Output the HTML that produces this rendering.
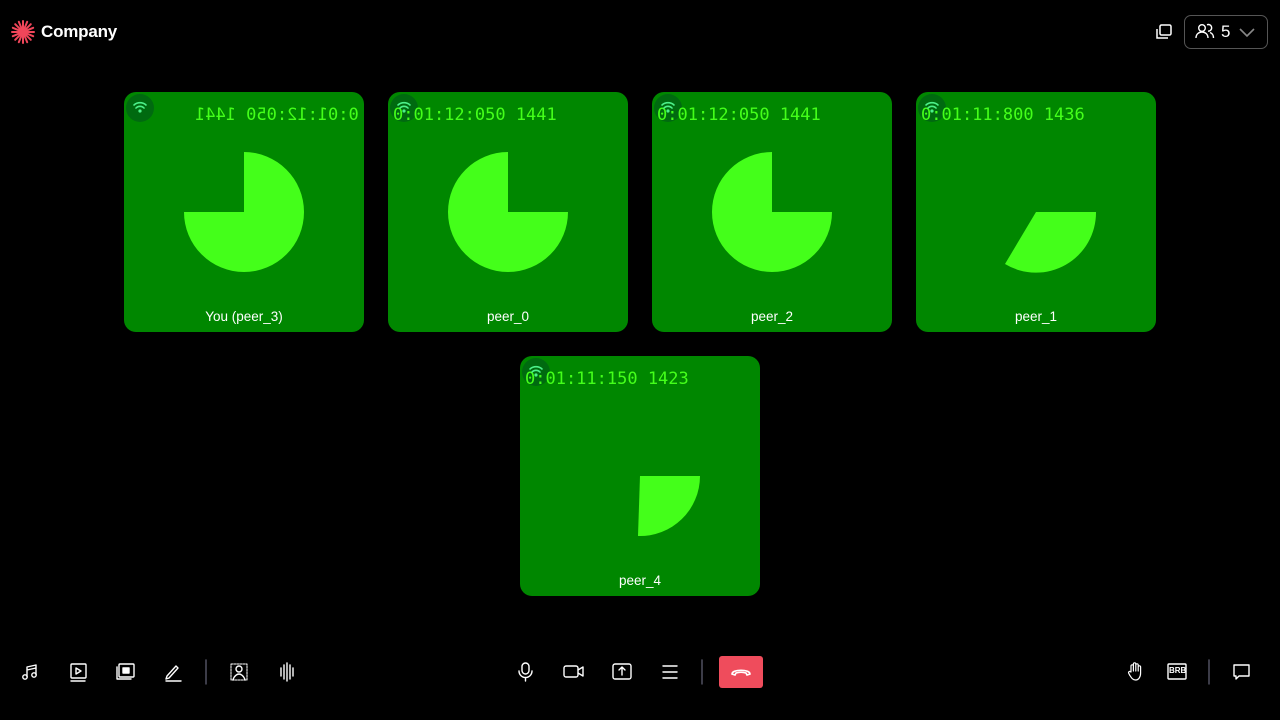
<!DOCTYPE html>
<html><head><style>
body{margin:0;width:1280px;height:720px;background:#000;font-family:"Liberation Sans",sans-serif;position:relative;overflow:hidden;color:#fff}
.tile{position:absolute;width:240px;height:240px;background:#008700;border-radius:12px;overflow:hidden}
.ts{position:absolute;top:13px;left:5px;font-family:"DejaVu Sans Mono","Liberation Mono",monospace;font-size:17px;color:#44ff1a;white-space:nowrap}
.mir{transform:scaleX(-1);left:auto;right:5px}
.wifi{position:absolute;left:2px;top:2px;width:28px;height:28px;border-radius:50%;background:#006a10}
.lbl{position:absolute;bottom:8px;width:100%;text-align:center;font-size:13.5px}
svg.p{position:absolute;left:0;top:0}
.ic{position:absolute}
</style></head><body>
<svg class="ic" style="left:11px;top:20px" width="24" height="24" viewBox="0 0 24 24"><g stroke="#f0465a" stroke-width="2" stroke-linecap="round"><line x1="12" y1="1" x2="12" y2="23"/><line x1="1" y1="12" x2="23" y2="12"/><line x1="4.2" y1="4.2" x2="19.8" y2="19.8"/><line x1="4.2" y1="19.8" x2="19.8" y2="4.2"/><line x1="7.8" y1="1.8" x2="16.2" y2="22.2"/><line x1="16.2" y1="1.8" x2="7.8" y2="22.2"/><line x1="1.8" y1="7.8" x2="22.2" y2="16.2"/><line x1="1.8" y1="16.2" x2="22.2" y2="7.8"/></g></svg>
<div style="position:absolute;left:41px;top:22px;font-size:17px;font-weight:bold;letter-spacing:-0.2px">Company</div>
<svg class="ic" style="left:1155px;top:23px" width="18" height="18" viewBox="0 0 18 18" fill="none" stroke="#fff" stroke-width="1.5"><rect x="5" y="2" width="11" height="10" rx="1.5"/><path d="M2 6v9h11"/></svg>
<div style="position:absolute;left:1184px;top:15px;width:82px;height:32px;border:1px solid #555;border-radius:7px"></div>
<svg class="ic" style="left:1195px;top:22px" width="20" height="18" viewBox="0 0 20 18" fill="none" stroke="#fff" stroke-width="1.4"><circle cx="7" cy="6" r="3.3"/><path d="M1 16c0-4 3-6 6-6s6 2 6 6"/><path d="M12 2.8a3.3 3.3 0 1 1 1 6.3M15 10.5c2 .7 3.5 2.5 3.5 5.5"/></svg>
<div style="position:absolute;left:1221px;top:22px;font-size:17px">5</div>
<svg class="ic" style="left:1238px;top:26px" width="18" height="12" viewBox="0 0 18 12" fill="none" stroke="#888" stroke-width="1.6"><path d="M2 3l7 7 7-7"/></svg>

<div class="tile" style="left:124px;top:92px"><div class="wifi"></div><div class="ts mir">0:01:12:050 1441</div>
<svg class="p" width="240" height="240"><path d="M120 120V60A60 60 0 1 1 60 120Z" fill="#44ff1a"/></svg><div class="lbl">You (peer_3)</div></div>
<div class="tile" style="left:388px;top:92px"><div class="wifi"></div><div class="ts">0:01:12:050 1441</div>
<svg class="p" width="240" height="240"><path d="M120 120H180A60 60 0 1 1 120 60Z" fill="#44ff1a"/></svg><div class="lbl">peer_0</div></div>
<div class="tile" style="left:652px;top:92px"><div class="wifi"></div><div class="ts">0:01:12:050 1441</div>
<svg class="p" width="240" height="240"><path d="M120 120H180A60 60 0 1 1 120 60Z" fill="#44ff1a"/></svg><div class="lbl">peer_2</div></div>
<div class="tile" style="left:916px;top:92px"><div class="wifi"></div><div class="ts">0:01:11:800 1436</div>
<svg class="p" width="240" height="240"><path d="M120 120H180A60 60 0 0 1 89 172Z" fill="#44ff1a"/></svg><div class="lbl">peer_1</div></div>
<div class="tile" style="left:520px;top:356px"><div class="wifi"></div><div class="ts">0:01:11:150 1423</div>
<svg class="p" width="240" height="240"><path d="M120 120H180A60 60 0 0 1 118 180Z" fill="#44ff1a"/></svg><div class="lbl">peer_4</div></div>

<svg width="1280" height="720" style="position:absolute;left:0;top:0" fill="none" stroke="#fff" stroke-width="1.4" stroke-linecap="round" stroke-linejoin="round">
<g stroke="#4cf08a" stroke-width="1.6"><path d="M134 105a9 9 0 0 1 12 0M136 108a5.5 5.5 0 0 1 8 0"/><circle cx="140" cy="111" r=".8" fill="#4cf08a"/>
<path d="M398 105a9 9 0 0 1 12 0M400 108a5.5 5.5 0 0 1 8 0"/><circle cx="404" cy="111" r=".8" fill="#4cf08a"/>
<path d="M662 105a9 9 0 0 1 12 0M664 108a5.5 5.5 0 0 1 8 0"/><circle cx="668" cy="111" r=".8" fill="#4cf08a"/>
<path d="M926 105a9 9 0 0 1 12 0M928 108a5.5 5.5 0 0 1 8 0"/><circle cx="932" cy="111" r=".8" fill="#4cf08a"/>
<path d="M530 369a9 9 0 0 1 12 0M532 372a5.5 5.5 0 0 1 8 0"/><circle cx="536" cy="375" r=".8" fill="#4cf08a"/></g>
<circle cx="25" cy="677" r="2.2"/><circle cx="34" cy="675" r="2.2"/><path d="M27 677v-10l9-2v10M27 670l9-2"/>
<rect x="71" y="664" width="15" height="14" rx="1"/><path d="M76 668v6l5-3z"/><path d="M71 681h14" />
<rect x="119" y="664" width="15" height="13" rx="1"/><path d="M117 667v12h14"/><rect x="123" y="668" width="6" height="5" fill="#fff"/>
<path d="M167 676l9-10 2 2-9 10-3 1zM166 681h15"/>
<path d="M206 660v24" stroke="#556"/>
<rect x="231" y="664" width="16" height="16" stroke-dasharray="2 1" stroke-width="1"/><circle cx="239" cy="669" r="3"/><path d="M233 680c1-4 4-6 6-6s5 2 6 6"/>
<path d="M281 668v8M284 665v14M287 663v18M290 665v14M293 668v8"/>
<rect x="522" y="663" width="7" height="11" rx="3.5"/><path d="M519 671a6.5 6.5 0 0 0 13 0M525.5 678v3"/>
<rect x="564" y="666" width="14" height="11" rx="2"/><path d="M578 670l5-3v9l-5-3"/>
<rect x="613" y="664" width="18" height="15" rx="2"/><path d="M622 675v-7M619 670l3-3 3 3"/>
<path d="M663 666h14M663 672h14M663 678h14"/>
<path d="M702 660v24" stroke="#556"/>
<path d="M1131 672v-6a1.2 1.2 0 0 1 2.4 0v5v-7a1.2 1.2 0 0 1 2.4 0v7v-6a1.2 1.2 0 0 1 2.4 0v6v-4a1.2 1.2 0 0 1 2.4 0v6c0 4-2 7-5 7s-4-2-6-5l-1-2a1.2 1.2 0 0 1 2-1.2z" stroke-width="1.2"/>
<rect x="1168" y="664" width="18" height="15" rx="1"/>
<path d="M1209 660v24" stroke="#556"/>
<path d="M1234 665h15v11h-10l-3 3v-3h-2z"/>
</svg>
<div style="position:absolute;left:1169px;top:666px;width:17px;text-align:center;font-size:8px;font-weight:bold;color:#fff">BRB</div>
<div style="position:absolute;left:719px;top:656px;width:44px;height:32px;background:#ef4c5c;border-radius:3px"></div>
<svg class="ic" style="left:729px;top:665px" width="24" height="14" viewBox="0 0 24 14" fill="none" stroke="#fff" stroke-width="1.6" stroke-linecap="round"><path d="M3 9c0-5 18-5 18 0l-3 1-1-2c-3-1-7-1-10 0l-1 2z"/></svg>
</body></html>
